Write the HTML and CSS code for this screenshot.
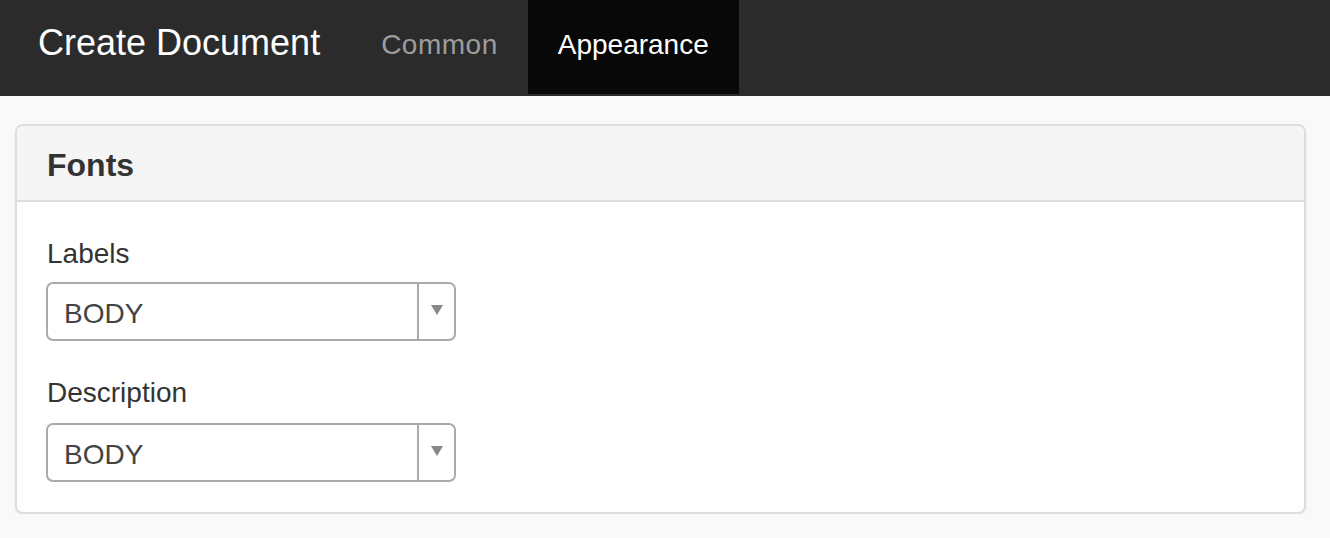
FILE: index.html
```html
<!DOCTYPE html>
<html>
<head>
<meta charset="utf-8">
<link rel="stylesheet" href="styles.css">
</head>
<body>
<nav class="navbar">
  <div class="brand">Create Document</div>
  <ul class="nav">
    <li class="nav-item">Common</li>
    <li class="nav-item active">Appearance</li>
  </ul>
</nav>
<main class="content">
  <section class="panel">
    <header class="panel-heading"><h3 class="panel-title">Fonts</h3></header>
    <div class="panel-body">
      <div class="form-group">
        <label class="label">Labels</label>
        <div class="select">
          <span class="select-value">BODY</span>
          <span class="select-arrow"><span class="tri"></span></span>
        </div>
      </div>
      <div class="form-group">
        <label class="label">Description</label>
        <div class="select">
          <span class="select-value">BODY</span>
          <span class="select-arrow"><span class="tri"></span></span>
        </div>
      </div>
    </div>
  </section>
</main>
</body>
</html>
```

FILE: styles.css
```css
* { box-sizing: border-box; }
html, body {
  margin: 0;
  padding: 0;
  background: #f9f9f9;
  font-family: "Liberation Sans", Arial, sans-serif;
  color: #333;
}
.navbar {
  display: flex;
  align-items: stretch;
  height: 96px;
  background: #2b2b2b;
  border-bottom: 2px solid #2b2b2b;
}
.brand {
  padding: 0 31px 0 38px;
  font-size: 36px;
  line-height: 86px;
  color: #fff;
}
.nav {
  display: flex;
  margin: 0;
  padding: 0;
  list-style: none;
}
.nav-item {
  padding: 0 30px;
  font-size: 28px;
  line-height: 90px;
  height: 94px;
  color: #9d9d9d;
  letter-spacing: 0.5px;
}
.nav-item.active {
  background: #080808;
  color: #fff;
  letter-spacing: 0;
}
.content {
  padding: 28px 24px 0 15px;
}
.panel {
  background: #fff;
  border: 2px solid #ddd;
  border-radius: 8px;
  box-shadow: 0 2px 3px rgba(0,0,0,0.05);
}
.panel-heading {
  background: #f5f5f5;
  border-bottom: 2px solid #ddd;
  border-radius: 6px 6px 0 0;
  padding: 22px 30px 18px;
}
.panel-title {
  margin: 0;
  font-size: 32px;
  line-height: 34px;
  font-weight: bold;
  color: #333;
}
.panel-body {
  padding: 32px 30px 30px;
}
.form-group {
  margin-bottom: 32px;
}
.form-group:last-child {
  margin-bottom: 0;
}
.form-group + .form-group .label {
  margin-bottom: 10px;
}
.label {
  display: block;
  font-size: 28px;
  line-height: 40px;
  margin-bottom: 8px;
  color: #333;
}
.select {
  display: flex;
  align-items: stretch;
  width: 410px;
  height: 59px;
  border: 2px solid #aaa;
  border-radius: 7px;
  background: #fff;
  margin-left: -1px;
}
.select-value {
  flex: 1;
  display: flex;
  align-items: center;
  padding: 4px 0 0 16px;
  font-size: 28px;
  color: #444;
}
.select-arrow {
  width: 37px;
  border-left: 2px solid #aaa;
  display: flex;
  align-items: center;
  justify-content: center;
  padding-bottom: 3px;
}
.tri {
  width: 0;
  height: 0;
  border-left: 6px solid transparent;
  border-right: 6px solid transparent;
  border-top: 10px solid #888;
}
```
